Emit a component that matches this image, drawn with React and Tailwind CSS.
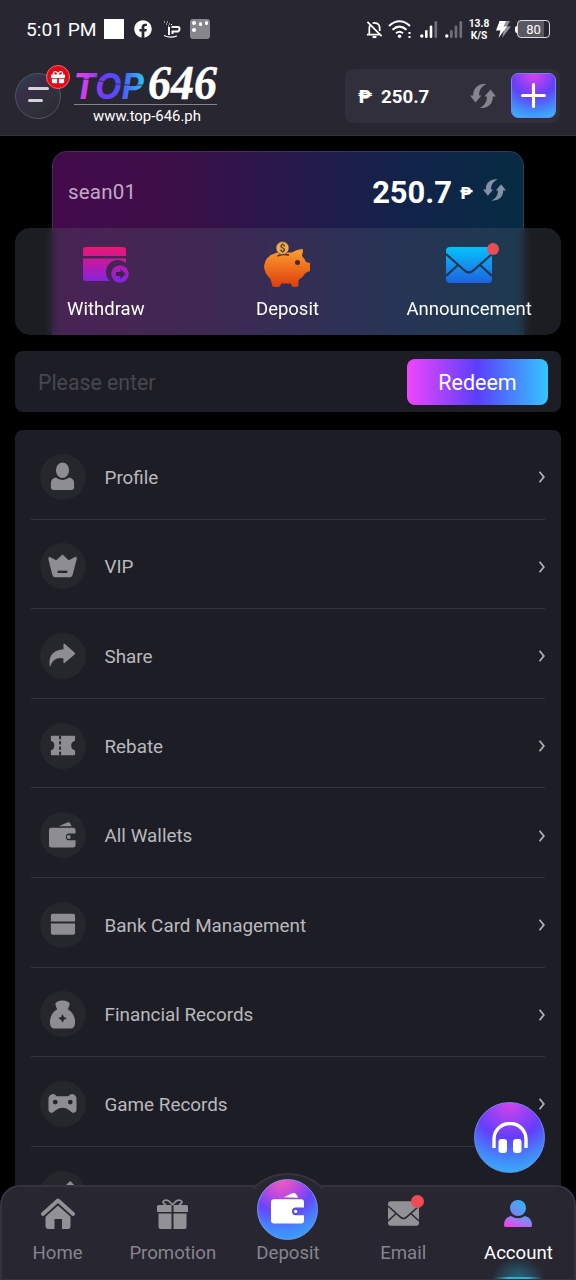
import { useState } from 'react';
import { FaFacebook, FaGift } from 'react-icons/fa';

function RefreshIcon({ className }) {
    return (
        <svg viewBox="0 0 26 24" className={className} fill="currentColor">
            <path d="M16.500 0 C7 -.5 3 5 3.200 11.500 H0 L5.500 18.500 L11.500 11.500 H9.200 C8.800 7 11 2.500 16.500 0z" />
            <path d="M16.500 0 C7 -.5 3 5 3.200 11.500 H0 L5.500 18.500 L11.500 11.500 H9.200 C8.800 7 11 2.500 16.500 0z" transform="rotate(180 13 12)" />
        </svg>
    );
}

function EnvelopeIcon({ className, fill, line }) {
    return (
        <svg viewBox="0 0 46 36" className={className}>
            <defs>
                <linearGradient id="mail" x1="0" y1="0" x2="0" y2="1">
                    <stop offset="0" stopColor="#06c3fb" />
                    <stop offset="1" stopColor="#1d62e0" />
                </linearGradient>
            </defs>
            <rect width="46" height="36" rx="4" fill={fill} />
            <path d="M0 7 L18 23 Q23 28 28 23 L46 7 M0 29 L12 18 M46 29 L34 18" fill="none" stroke={line} strokeWidth="2.2" />
        </svg>
    );
}

function WalletIcon({ className, hole }) {
    return (
        <svg viewBox="0 0 34 32" className={className} fill="currentColor">
            <path d="M13 5 L22 .8 Q25 -.4 26.500 2.500 L28 5.500z" />
            <path d="M3 7 H31 Q34 7 34 10 V15.500 H26 A4 4 0 0 0 26 23.500 H34 V29 Q34 32 31 32 H3 Q0 32 0 29 V10 Q0 7 3 7z" />
            <circle cx="25.500" cy="19.500" r="3.700" fill={hole} />
            <circle cx="25.500" cy="19.500" r="1.700" />
        </svg>
    );
}

function StatusBar() {
    return (
        <div className="flex h-[58px] items-center pl-[26px] pr-[26px] text-white">
            <span className="w-[72px] whitespace-nowrap pt-[2px] text-[19.200px] leading-none">5:01 PM</span>
            <div className="ml-[6px] size-[20px] bg-white" />
            <FaFacebook className="ml-[10px] size-[18px]" />
            <svg viewBox="0 0 18 18" className="ml-[11px] size-[18px]" fill="none" stroke="white">
                <path d="M6 7 V15 M8.500 7 H15 Q16.500 7 16.500 9 T15 11.500 H9.500 V14" strokeWidth="2" />
                <path d="M1 15.500 Q7 18.500 14 16" strokeWidth="1.200" />
                <path d="M1 2 h1 M4 2 h1 M3 4 h1 M6 4 h1 M5 6 h1 M8 4.500 h1" strokeWidth="1.200" />
            </svg>
            <div className="ml-[9px] flex size-[20px] gap-[3px] rounded-[3px] bg-[#87868d] p-[2px]">
                <div className="flex flex-col gap-[3px]">
                    <span className="size-[4px] rounded-full bg-white" />
                    <span className="size-[4px] rounded-full bg-white" />
                </div>
                <span className="mt-px size-[4px] rounded-full bg-white" />
                <span className="size-[4px] rounded-full bg-white" />
            </div>

            <svg viewBox="0 0 18 19" className="ml-auto h-[19px] w-[17px]" fill="none" stroke="white" strokeWidth="1.800">
                <path d="M3.500 15 V8 Q3.500 5.500 5 4.500 M7 3 Q9 2 11.500 3 Q14.500 4.500 14.500 8 V11 M1 15 H14 M1.500 1.500 L16.500 16.500" />
                <path d="M7 17.500 H11" strokeWidth="2.200" />
            </svg>
            <svg viewBox="0 0 24 19" className="ml-[5px] h-[19px] w-[24px]" fill="none" stroke="white" strokeWidth="2">
                <path d="M1 6 Q11.500 -3.500 22 6 M4.500 9.800 Q11.500 3.500 18.500 9.800 M8 13.200 Q11.500 10.200 15 13.200" />
                <circle cx="11.500" cy="16.200" r="1.800" fill="white" stroke="none" />
                <path d="M20.500 13 h2 M20.500 17 h2" strokeWidth="1.800" />
            </svg>
            <svg viewBox="0 0 18 18" className="ml-[8px] size-[18px]" fill="white">
                <circle cx="1.800" cy="16" r="1.700" />
                <rect x="5" y="10" width="2.600" height="8" rx="1.200" />
                <rect x="9.700" y="5.500" width="2.600" height="12.500" rx="1.200" />
                <rect x="14.500" y="1" width="2.600" height="17" rx="1.200" opacity=".35" />
            </svg>
            <svg viewBox="0 0 18 18" className="ml-[7px] size-[18px]" fill="white">
                <circle cx="1.800" cy="16" r="1.700" />
                <rect x="5" y="10" width="2.600" height="8" rx="1.200" opacity=".35" />
                <rect x="9.700" y="5.500" width="2.600" height="12.500" rx="1.200" opacity=".35" />
                <rect x="14.500" y="1" width="2.600" height="17" rx="1.200" opacity=".35" />
            </svg>
            <div className="ml-[5px] w-[22px] pt-px text-center text-[10.200px] font-bold leading-[12px]">
                <div>13.8</div>
                <div>K/S</div>
            </div>
            <svg viewBox="0 0 15 17" className="ml-[6px] h-[17px] w-[15px]" fill="white">
                <path d="M8 0 H14 L11 5.500 H15 L6 17 L8 9z" opacity=".5" />
                <path d="M3.500 0 H10 L7.500 5.500 H11 L2.500 17 L4.500 9.500 H0z" />
            </svg>
            <div className="ml-[4px] h-[7px] w-[2px] rounded-l bg-white" />
            <div className="flex h-[18px] w-[33px] items-center justify-center rounded-[4px] border-[1.500px] border-[#dddde0] bg-[linear-gradient(90deg,#5a5961_84%,#282631_84%)] text-[13px] leading-none">
                80
            </div>
        </div>
    );
}

function Logo() {
    return (
        <div className="ml-[13px] w-[143px]">
            <svg viewBox="0 -16 146 66" className="-mb-[13px] -mt-[16px] block h-[66px] w-[146px]">
                <defs>
                    <linearGradient id="top" x1="0" x2="1">
                        <stop offset="0" stopColor="#e445ea" />
                        <stop offset=".22" stopColor="#c23df0" />
                        <stop offset=".42" stopColor="#6b3df5" />
                        <stop offset=".65" stopColor="#4b52f8" />
                        <stop offset="1" stopColor="#2fc4f5" />
                    </linearGradient>
                </defs>
                <text x="-1" y="32" textLength="71" lengthAdjust="spacingAndGlyphs" fill="url(#top)" className="font-['Inter'] text-[35px] font-bold italic">TOP</text>
                <path d="M0 12 Q16 11 32 15 T69 18" fill="none" stroke="#282631" strokeWidth=".8" />
                <text x="74" y="32" textLength="69" lengthAdjust="spacingAndGlyphs" fill="white" stroke="white" strokeWidth=".5" className="font-['Liberation_Serif'] text-[48px] font-bold italic">646</text>
            </svg>
            <div className="border-t border-[#85848c] pt-[2px] pl-[3px] text-center text-[14.900px] leading-[18px] text-white">www.top-646.ph</div>
        </div>
    );
}

function Header() {
    return (
        <header className="h-[136px] shrink-0 border-b border-[#34333d] bg-[#282631]">
            <StatusBar />
            <div className="flex h-[76px] items-center pl-[15px] pr-[16px]">
                <div className="relative flex size-[46px] flex-col justify-center gap-[9px] rounded-full border border-[#55565f] bg-[linear-gradient(145deg,#294752_0%,#382d48_35%,#30303a_65%,#292832_100%)] pb-[3px] pl-[12px]">
                    <span className="h-[3px] w-[21px] rounded bg-[#d4d3d9]" />
                    <span className="h-[3px] w-[15px] rounded bg-[#d4d3d9]" />
                    <div className="absolute -right-[10px] -top-[9px] flex size-[24px] items-center justify-center rounded-full border border-[#ef6b70] bg-[#e50914]">
                        <FaGift className="size-[14px] text-white" />
                    </div>
                </div>
                <Logo />
                <div className="ml-auto flex h-[54px] w-[215px] items-center rounded-[8px] bg-[#302f3b] pl-[13px] pr-[4px]">
                    <span className="w-[23px] text-[19px] font-black leading-none text-white">₱</span>
                    <span className="pt-[2px] text-[18.700px] font-bold leading-none text-white">250.7</span>
                    <RefreshIcon className="ml-auto h-[24px] w-[26px] text-[#85858d]" />
                    <button className="mb-px ml-[15px] flex size-[45px] items-center justify-center rounded-[7px] border border-[#7384ef] bg-[radial-gradient(circle_at_50%_0%,#dc42ed_0%,#623ffb_48%,#4488fb_76%,#36bdfb_100%)]">
                        <svg viewBox="0 0 24 24" className="size-[25px]" stroke="white" strokeWidth="3" strokeLinecap="round">
                            <path d="M12 1.500 V22.500 M1.500 12 H22.500" />
                        </svg>
                    </button>
                </div>
            </div>
        </header>
    );
}

function WithdrawIcon() {
    return (
        <svg viewBox="0 0 47 37" className="h-[37px] w-[47px]">
            <defs>
                <linearGradient id="withdraw" x1="0" y1="0" x2="0" y2="37" gradientUnits="userSpaceOnUse">
                    <stop offset="0" stopColor="#ec166f" />
                    <stop offset=".5" stopColor="#b91bae" />
                    <stop offset="1" stopColor="#7b25e8" />
                </linearGradient>
            </defs>
            <path d="M3 0 H40 Q43 0 43 3 V9 H0 V3 Q0 0 3 0z M0 11.500 H43 V16 A11 11 0 0 0 27 34 H3 Q0 34 0 31z" fill="url(#withdraw)" />
            <circle cx="37" cy="27" r="9.500" fill="url(#withdraw)" stroke="#40284e" strokeWidth="1.500" />
            <path d="M37.500 22 L42.500 27 L37.500 32 V29 H33 V25 H37.500z" fill="#40214e" />
        </svg>
    );
}

function PiggyIcon() {
    return (
        <svg viewBox="0 0 47 47" className="h-[47px] w-[47px]">
            <defs>
                <linearGradient id="pig" x1="0" y1="10" x2="0" y2="47" gradientUnits="userSpaceOnUse">
                    <stop offset="0" stopColor="#fb9b2c" />
                    <stop offset="1" stopColor="#dd3a0b" />
                </linearGradient>
            </defs>
            <path d="M13 11.500 H28 Q32 8.500 38.500 8 Q39.500 8.500 38 15 Q41 18 42 21 L46 22 V30 L41.500 32 Q39 36.500 34.500 39 V44.500 Q34 46 31 46 Q28 46 27.500 44.500 L27 42.500 H17 L16.500 44.500 Q16 46 13 46 H10 Q8.500 46 8 44 L6.500 38 Q0 32 0 25 Q1 15 13 11.500z" fill="url(#pig)" />
            <path d="M13.500 15 Q19 12.500 25 14" stroke="#4c2530" strokeWidth="1.500" fill="none" />
            <circle cx="33.500" cy="21.500" r="2.500" fill="#4c2530" />
            <circle cx="18.500" cy="7" r="6.500" fill="#e9ad50" stroke="#513642" strokeWidth=".6" />
            <text x="18.500" y="10.500" textAnchor="middle" fill="#5e3a28" className="text-[10px] font-bold">$</text>
        </svg>
    );
}

function BalanceCard() {
    return (
        <section>
            <div className="mx-[37px] h-[184px] rounded-t-[15px] border border-b-0 border-[#433058] bg-[linear-gradient(90deg,#430a4a_0%,#3c0e48_25%,#25194a_52%,#12234a_75%,#062b42_100%)]">
                <div className="flex h-[78px] items-center pl-[15px] pr-[17px]">
                    <span className="pt-[2px] text-[20.500px] tracking-[.2px] text-[#c2a8c9]">sean01</span>
                    <span className="ml-auto pt-[4px] text-[30.900px] font-bold leading-none text-white">250.7</span>
                    <span className="ml-[8px] w-[23px] pt-[4px] text-[17px] font-black leading-none text-white">₱</span>
                    <RefreshIcon className="mb-[3px] h-[22px] w-[23px] text-[#8391a8]" />
                </div>
            </div>
            <div className="relative -mt-[107px] grid h-[107px] grid-cols-3 rounded-[15px] bg-[#566072]/30 pt-[13px] pr-px text-[18.500px] leading-[22px] text-white backdrop-blur-[5px]">
                <div className="flex flex-col items-center">
                    <div className="flex h-[57px] items-start pl-px pt-[6px]"><WithdrawIcon /></div>
                    Withdraw
                </div>
                <div className="flex flex-col items-center">
                    <div className="flex h-[57px] items-start"><PiggyIcon /></div>
                    Deposit
                </div>
                <div className="flex flex-col items-center">
                    <div className="flex h-[57px] items-start pt-[6px]">
                        <div className="relative">
                            <EnvelopeIcon className="h-[36px] w-[46px]" fill="url(#mail)" line="#243451" />
                            <span className="absolute -right-[7px] -top-[4px] size-[12px] rounded-full bg-[#e84d55]" />
                        </div>
                    </div>
                    Announcement
                </div>
            </div>
        </section>
    );
}

const menu = [
    {
        label: 'Profile',
        icon: <><ellipse cx="15" cy="8.500" rx="6.800" ry="8" /><path d="M8 16 Q15 21 22 16 Q27 17 27 22 V26.500 Q27 29 24.500 29 H5.500 Q3 29 3 26.500 V22 Q3 17 8 16z" /></>,
    },
    {
        label: 'VIP',
        icon: <><path d="M1.500 5 L8.500 8.500 L15 2.500 L21.500 8.500 L28.500 5 Q30.500 5.500 29.500 8 L25.500 23.500 Q25 26 23 26 H7 Q5 26 4.500 23.500 L.5 8 Q0 5.500 1.500 5z" /><path d="M10 20.500 H20" stroke="#26262d" strokeWidth="2.400" /></>,
    },
    {
        label: 'Share',
        icon: <path d="M16 3.500 Q16 2 17.500 3 L27.500 12 Q28.500 13 27.500 14 L17.500 22.500 Q16 23.500 16 22 V18 Q5.500 16 2 27 Q-1 10 16 8.500z" />,
    },
    {
        label: 'Rebate',
        icon: <><path d="M4 5 H27 Q28 5 28 6 V10 Q24 11 24 15 T28 20 V24 Q28 25 27 25 H4 Q3 25 3 24 V20 Q6.500 19 6.500 15 T3 10 V6 Q3 5 4 5z" /><path d="M12.500 5 V25" stroke="#26262d" strokeWidth="2" strokeDasharray="3.500 2" /></>,
    },
    {
        label: 'All Wallets',
        icon: <><path d="M11 5.500 L20 1.500 Q22 1 23 2.500 L24.500 5.500z" /><path d="M3 7 H26 Q28.500 7 28.500 9.500 V13 H22 A3.500 3.500 0 0 0 22 20 H28.500 V25 Q28.500 27.500 26 27.500 H3.500 Q1 27.500 1 25 V9.500 Q1 7 3 7z" /><circle cx="21.500" cy="16.500" r="2" /></>,
    },
    {
        label: 'Bank Card Management',
        icon: <path d="M5 4 H26 Q28 4 28 6 V12 H3 V6 Q3 4 5 4z M3 14 H28 V23.500 Q28 25.500 26 25.500 H5 Q3 25.500 3 23.500z" />,
    },
    {
        label: 'Financial Records',
        icon: <><path d="M9 2 Q15 -1 21 2 Q23 3 22 6 L20.500 9.500 Q28 14 28 23 Q28 29.500 23 29.500 H7 Q2 29.500 2 23 Q2 14 9.500 9.500 L8 6 Q7 3 9 2z" /><path d="M15 14.500 L16.500 17.500 L19.500 19 L16.500 20.500 L15 23.500 L13.500 20.500 L10.500 19 L13.500 17.500z" fill="#26262d" /></>,
    },
    {
        label: 'Game Records',
        icon: <><path d="M3 6 Q6 4 9 7.500 H21 Q24 4 27 6 Q29.500 7 29.500 11 V21 Q29.500 25 25.500 24.500 Q24 24 22 22 Q18.500 19.500 15 19.500 T8 22 Q6 24 4.500 24.500 Q.5 25 .5 21 V11 Q.5 7 3 6z" /><circle cx="7.500" cy="13.500" r="2.500" fill="#26262d" /><circle cx="23" cy="13.500" r="2.500" fill="#26262d" /></>,
    },
    {
        label: 'Settings',
        icon: <path d="M23 2 L29 8 L9 28 H2 V22z" />,
    },
];

function MenuItem({ item }) {
    return (
        <div className="flex h-[89.600px] shrink-0 items-center border-b border-[#34343d] pl-[9px] pt-[5px]">
            <div className="flex size-[46px] items-center justify-center rounded-full bg-[#26262d]">
                <svg viewBox="0 0 30 30" className="mr-px size-[29px] text-[#8e8d93]" fill="currentColor">{item.icon}</svg>
            </div>
            <span className="ml-[18.500px] pt-[2px] text-[18.850px] leading-[24px] text-[#b9b9bd]">{item.label}</span>
            <svg viewBox="0 0 8 12" className="ml-auto mr-[-1px] mt-px h-[12px] w-[8px]" fill="none" stroke="#b0b0b5" strokeWidth="1.800">
                <path d="M1.500 .8 L5.800 6 L1.500 11.200" />
            </svg>
        </div>
    );
}

function NavItem({ label, children, active }) {
    return (
        <div className={`relative flex flex-1 flex-col items-center text-[18.600px] leading-[22px] ${active ? 'text-white' : 'text-[#86858d]'}`}>
            {active && <div className="absolute bottom-0 h-[22px] w-[54px] bg-[radial-gradient(ellipse_at_50%_100%,#246a80_0%,#282631_70%)]" />}
            {active && <div className="absolute bottom-0 h-[2px] w-[50px] bg-[linear-gradient(90deg,#282631_0%,#25b4d7_30%,#25b4d7_70%,#282631_100%)]" />}
            <div className="flex h-[55px] items-center justify-center pb-[2px]">{children}</div>
            <span className="relative">{label}</span>
        </div>
    );
}

function BottomNav() {
    return (
        <nav className="absolute inset-x-0 bottom-0 h-[95px] rounded-t-[20px] border-2 border-b border-[#34333e] bg-[#282631]">
            <div className="absolute left-1/2 top-[-14px] h-[16px] w-[76px] -translate-x-1/2 overflow-hidden">
                <div className="-ml-[12px] size-[100px] rounded-full border-2 border-[#34333e] bg-[#282631]" />
            </div>
            <div className="-mx-[2px] flex h-full">
                <NavItem label="Home">
                    <svg viewBox="0 0 34 31" className="h-[31px] w-[34px]" fill="#929196">
                        <path d="M17 7 L29.500 18 V28 Q29.500 31 27 31 H21 V21 H13.500 V31 H7.500 Q4.500 31 4.500 28 V18z" />
                        <path d="M2 16 L17 2.500 L32 16" fill="none" stroke="#929196" strokeWidth="4" strokeLinecap="round" strokeLinejoin="round" />
                        <path d="M3 19 L17 6.500 L31 19" fill="none" stroke="#282631" strokeWidth="1.500" />
                    </svg>
                </NavItem>
                <NavItem label="Promotion">
                    <svg viewBox="0 0 31 30" className="h-[30px] w-[31px]" fill="#929196">
                        <path d="M1.500 6 H14.500 V13 H0 V7.500 Q0 6 1.500 6z M16.500 6 H29.500 Q31 6 31 7.500 V13 H16.500z M1.500 14.500 H14.500 V30 H3.500 Q1.500 30 1.500 28z M16.500 14.500 H29.500 V28 Q29.500 30 27.500 30 H16.500z" />
                        <path d="M15.500 6 Q11 0 7.500 1.500 T9 6 M15.500 6 Q20 0 23.500 1.500 T22 6" fill="none" stroke="#929196" strokeWidth="1.800" />
                    </svg>
                </NavItem>
                <NavItem label="Deposit">
                    <div className="mr-px mt-[-9px] flex size-[61px] shrink-0 items-center justify-center rounded-full border border-[#7f91f4] bg-[radial-gradient(circle_at_40%_0%,#f45ab9_0%,#c44bdc_22%,#6546fb_48%,#4686fb_72%,#24baf5_100%)]">
                        <WalletIcon className="mb-[3px] h-[32px] w-[33px] text-white" hole="#5650e0" />
                    </div>
                </NavItem>
                <NavItem label="Email">
                    <div className="relative">
                        <EnvelopeIcon className="h-[25px] w-[31px]" fill="#929196" line="#282631" />
                        <span className="absolute -right-[5px] -top-[6px] size-[13px] rounded-full bg-[#ef4b52]" />
                    </div>
                </NavItem>
                <NavItem label="Account" active>
                    <svg viewBox="0 0 28 27" className="relative h-[27px] w-[28px]">
                        <defs>
                            <linearGradient id="user" x1="0" y1="1" x2="1" y2="0">
                                <stop offset="0" stopColor="#ff35e6" />
                                <stop offset=".5" stopColor="#a873f2" />
                                <stop offset="1" stopColor="#48a9ef" />
                            </linearGradient>
                            <linearGradient id="head" x1="0" y1="1" x2="1" y2="0">
                                <stop offset="0" stopColor="#8974ef" />
                                <stop offset="1" stopColor="#22c3f5" />
                            </linearGradient>
                        </defs>
                        <circle cx="14" cy="8" r="8" fill="url(#head)" />
                        <path d="M7 16 Q14 20.500 21 16 Q28 18 28 25 Q28 27 27 27 H1 Q0 27 0 25 Q0 18 7 16z" fill="url(#user)" />
                    </svg>
                </NavItem>
            </div>
        </nav>
    );
}

export default function App() {
    const [code, setCode] = useState('');

    return (
        <div className="relative flex h-[1280px] w-[576px] flex-col overflow-hidden bg-black font-['Roboto',sans-serif]">
            <Header />
            <main className="flex min-h-0 flex-1 flex-col overflow-hidden px-[15px] pt-[15px]">
                <BalanceCard />
                <div className="mt-[16px] flex h-[61px] shrink-0 items-center rounded-[8px] bg-[#1d1e25] pl-[23px] pr-[13px]">
                    <input
                        value={code}
                        onChange={(e) => setCode(e.target.value)}
                        placeholder="Please enter"
                        className="min-w-0 flex-1 pt-[2px] text-[21.300px] text-white placeholder:text-[#46474d]"
                    />
                    <button className="h-[46px] w-[141px] rounded-[8px] bg-[linear-gradient(90deg,#ef46fb_0%,#5a3ffb_50%,#34c6ff_100%)] pt-[3px] text-[21.500px] text-white">Redeem</button>
                </div>
                <div className="mt-[18px] flex shrink-0 flex-col rounded-[8px] bg-[#1d1e25] px-[16px]">
                    {menu.map((item) => <MenuItem key={item.label} item={item} />)}
                </div>
            </main>
            <button className="absolute right-[31px] top-[1102px] flex size-[71px] items-center justify-center rounded-full border border-[#6b8bf3] bg-[radial-gradient(circle_at_50%_0%,#d444ec_0%,#633efb_46%,#4486fb_72%,#30c0f8_100%)]">
                <svg viewBox="0 0 36 32" className="h-[32px] w-[36px]" fill="white">
                    <path d="M2 26 V17 A16 15.500 0 0 1 34 17 V26" fill="none" stroke="white" strokeWidth="3.400" />
                    <rect x="6.500" y="17" width="8.500" height="14" rx="3" />
                    <rect x="21" y="17" width="8.500" height="14" rx="3" />
                </svg>
            </button>
            <BottomNav />
        </div>
    );
}
